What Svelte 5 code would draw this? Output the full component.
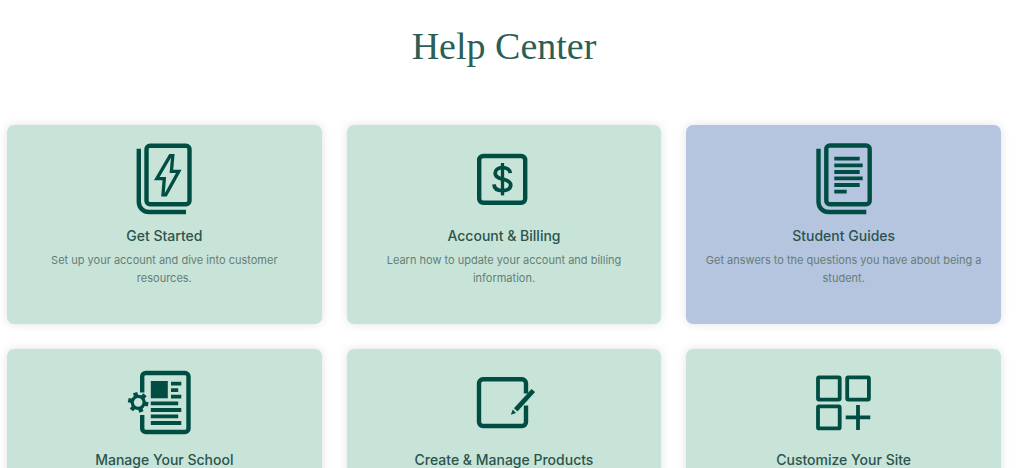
<script lang="ts">
  interface Topic {
    icon: string
    title: string
    text?: string
    student?: boolean
  }

  const topics: Topic[] = [
    { icon: 'start', title: 'Get Started', text: 'Set up your account and dive into customer resources.' },
    { icon: 'billing', title: 'Account & Billing', text: 'Learn how to update your account and billing information.' },
    { icon: 'guides', title: 'Student Guides', text: 'Get answers to the questions you have about being a student.', student: true },
    { icon: 'school', title: 'Manage Your School' },
    { icon: 'products', title: 'Create & Manage Products' },
    { icon: 'site', title: 'Customize Your Site' }
  ]

  const teeth = [0, 60, 120, 180, 240, 300]
</script>

<main class="page">
  <h1>Help Center</h1>

  <div class="grid">
    {#each topics as topic (topic.icon)}
      <a href="#{topic.icon}" class="card" class:student={topic.student}>
        <svg class="icon" viewBox="0 0 80 80" aria-hidden="true">
          {#if topic.icon === 'start'}
            <rect x="22.5" y="6.7" width="43" height="58.6" rx="3.5" />
            <path d="M14.8 9.7V63a10 10 0 0 0 10 10H62" />
            <path class="thin" d="M46.2 16.6 32.8 39.6H40.3L39 55.8H41.8L54.8 32.4H47.4L48.8 16.6Z" />
          {:else if topic.icon === 'billing'}
            <rect x="15.2" y="17" width="46" height="46.8" rx="4" />
            <path class="medium" d="M46.2 34.2C46 30.6 42.8 28.7 38.5 28.7C34 28.7 31.2 30.9 31.2 34.3C31.2 38.1 34.3 39.2 38.5 40.1C43.6 41.2 46.7 42.5 46.7 46.1C46.7 49.6 43.4 51.7 38.7 51.7C33.5 51.7 30.2 49.4 30 45.4" />
            <path class="thin" d="M38.5 24V56.4" />
          {:else if topic.icon === 'guides'}
            <rect x="22.3" y="6.5" width="43.4" height="58.8" rx="3.5" />
            <path d="M14.5 9.7V63a10 10 0 0 0 10 10H62.3" />
            <path class="medium" d="M30.3 19.7H55.7M30.3 26.3H58.7M30.3 33H55.7M30.3 39.4H58.7M30.3 46H55.7M30.3 52.7H42.7" />
          {:else if topic.icon === 'school'}
            <path d="M18.2 29.5V13.5a3.5 3.5 0 0 1 3.5-3.5H61a3.5 3.5 0 0 1 3.5 3.5V65.5a3.5 3.5 0 0 1-3.5 3.5H21.7a3.5 3.5 0 0 1-3.5-3.5V52" />
            <path class="solid" d="M26.8 18H43.8V35.3H26.8Z" />
            <path class="medium" d="M47 20.6H57.3M47 27.1H54.2M47 33.7H57.3M26.8 40.3H54.2M26.8 47H57.3M26.8 53.4H54.2M26.8 60H57.3" />
            <g transform="translate(14.2 39.3)">
              <circle class="thin" r="6" />
              {#each teeth as angle (angle)}
                <path d="M0-6.5V-10.2" transform="rotate({angle - 18})" />
              {/each}
            </g>
          {:else if topic.icon === 'products'}
            <path d="M62 30.5V20.3a4 4 0 0 0-4-4H19a4 4 0 0 0-4 4V59a4 4 0 0 0 4 4H58a4 4 0 0 0 4-4V42.5" />
            <path class="pencil" d="M69.3 27.5 51.7 46.8" />
            <path class="solid" d="M48.7 46.6 52 50 46.9 51.7Z" />
          {:else}
            <rect class="medium" x="14" y="14.4" width="21.7" height="22.2" rx="1" />
            <rect class="medium" x="43.2" y="14.4" width="21.7" height="22.2" rx="1" />
            <rect class="medium" x="14" y="43.4" width="21.7" height="22" rx="1" />
            <path class="medium" d="M41.7 54.4H66.3M54 42V67" />
          {/if}
        </svg>
        <h2>{topic.title}</h2>
        {#if topic.text}
          <p>{topic.text}</p>
        {/if}
      </a>
    {/each}
  </div>
</main>

<style>
  :global(body) {
    margin: 0;
    background: #fff;
  }

  .page {
    padding: 24px 23px 24px 7px;
    font-family: Inter, 'Liberation Sans', sans-serif;
  }

  h1 {
    margin: 0 0 57px;
    color: #2b5e54;
    font-family: 'Liberation Serif', serif;
    font-size: 38px;
    font-weight: 400;
    line-height: 44px;
    text-align: center;
  }

  .grid {
    display: grid;
    grid-template-columns: repeat(3, 1fr);
    gap: 25px;
  }

  .card {
    display: flex;
    flex-direction: column;
    align-items: center;
    box-sizing: border-box;
    min-height: 199px;
    padding: 14px 16px 36px;
    border-radius: 7px;
    background: #c8e4d8;
    box-shadow: 0 0 10px rgba(30, 30, 60, 0.13);
    text-align: center;
    text-decoration: none;
  }

  .student {
    background: #b5c5e0;
  }

  .icon {
    width: 80px;
    height: 80px;
    fill: none;
    stroke: #004e43;
    stroke-width: 4.4;
  }

  .thin {
    stroke-width: 3.3;
  }

  .medium {
    stroke-width: 3.8;
  }

  .pencil {
    stroke-width: 4.8;
  }

  .solid {
    fill: #004e43;
    stroke: none;
  }

  h2 {
    margin: 8px 0 6px;
    color: #2a544c;
    font-size: 14px;
    font-weight: 500;
    line-height: 18px;
  }

  p {
    margin: 0;
    color: #667d76;
    font-size: 11px;
    line-height: 18px;
  }
</style>
